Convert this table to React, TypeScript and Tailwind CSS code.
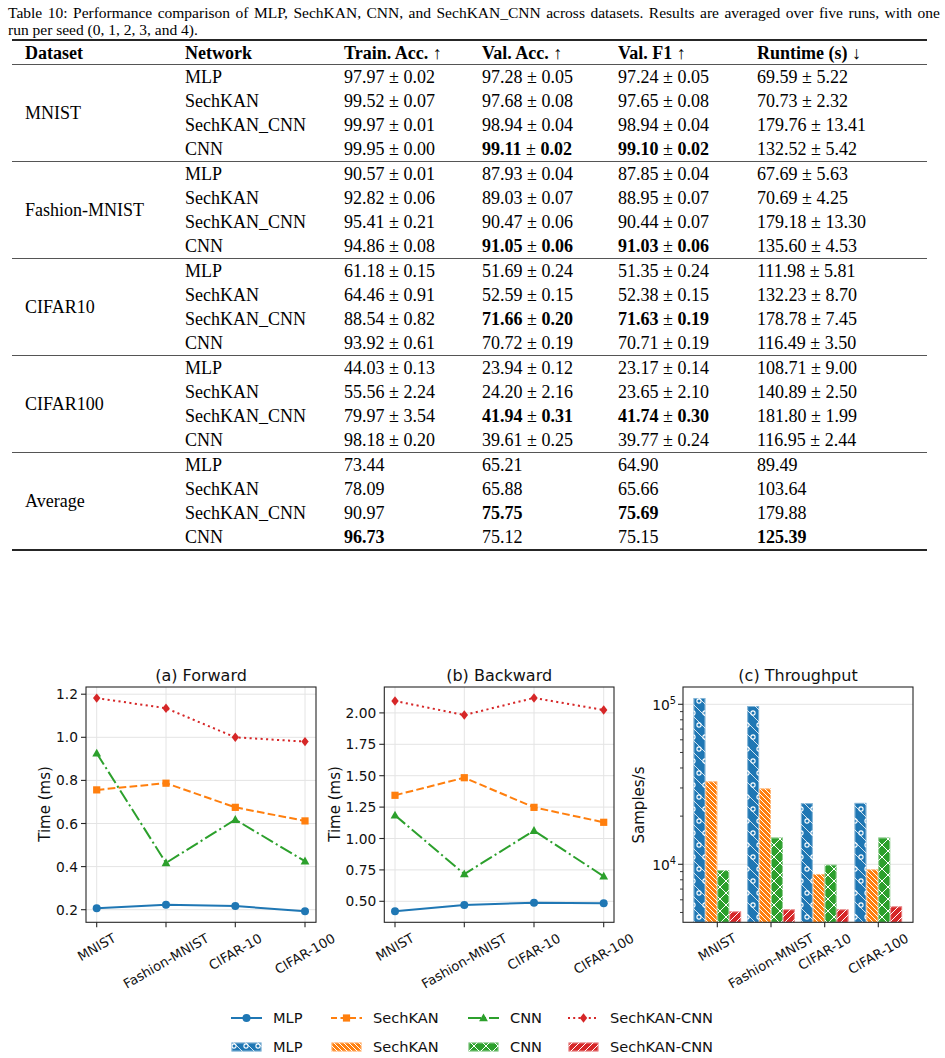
import React from "react";

const BLUE = "#1f77b4";
const ORANGE = "#ff7f0e";
const GREEN = "#2ca02c";
const RED = "#d62728";
const SANS = "'DejaVu Sans', 'Liberation Sans', sans-serif";

type Row = [string, string, string, string, string];
const groups: { name: string; rows: Row[] }[] = [
  {
    name: "MNIST",
    rows: [
      ["MLP", "97.97 ± 0.02", "97.28 ± 0.05", "97.24 ± 0.05", "69.59 ± 5.22"],
      ["SechKAN", "99.52 ± 0.07", "97.68 ± 0.08", "97.65 ± 0.08", "70.73 ± 2.32"],
      ["SechKAN_CNN", "99.97 ± 0.01", "98.94 ± 0.04", "98.94 ± 0.04", "179.76 ± 13.41"],
      ["CNN", "99.95 ± 0.00", "*99.11 ± 0.02", "*99.10 ± 0.02", "132.52 ± 5.42"],
    ],
  },
  {
    name: "Fashion-MNIST",
    rows: [
      ["MLP", "90.57 ± 0.01", "87.93 ± 0.04", "87.85 ± 0.04", "67.69 ± 5.63"],
      ["SechKAN", "92.82 ± 0.06", "89.03 ± 0.07", "88.95 ± 0.07", "70.69 ± 4.25"],
      ["SechKAN_CNN", "95.41 ± 0.21", "90.47 ± 0.06", "90.44 ± 0.07", "179.18 ± 13.30"],
      ["CNN", "94.86 ± 0.08", "*91.05 ± 0.06", "*91.03 ± 0.06", "135.60 ± 4.53"],
    ],
  },
  {
    name: "CIFAR10",
    rows: [
      ["MLP", "61.18 ± 0.15", "51.69 ± 0.24", "51.35 ± 0.24", "111.98 ± 5.81"],
      ["SechKAN", "64.46 ± 0.91", "52.59 ± 0.15", "52.38 ± 0.15", "132.23 ± 8.70"],
      ["SechKAN_CNN", "88.54 ± 0.82", "*71.66 ± 0.20", "*71.63 ± 0.19", "178.78 ± 7.45"],
      ["CNN", "93.92 ± 0.61", "70.72 ± 0.19", "70.71 ± 0.19", "116.49 ± 3.50"],
    ],
  },
  {
    name: "CIFAR100",
    rows: [
      ["MLP", "44.03 ± 0.13", "23.94 ± 0.12", "23.17 ± 0.14", "108.71 ± 9.00"],
      ["SechKAN", "55.56 ± 2.24", "24.20 ± 2.16", "23.65 ± 2.10", "140.89 ± 2.50"],
      ["SechKAN_CNN", "79.97 ± 3.54", "*41.94 ± 0.31", "*41.74 ± 0.30", "181.80 ± 1.99"],
      ["CNN", "98.18 ± 0.20", "39.61 ± 0.25", "39.77 ± 0.24", "116.95 ± 2.44"],
    ],
  },
  {
    name: "Average",
    rows: [
      ["MLP", "73.44", "65.21", "64.90", "89.49"],
      ["SechKAN", "78.09", "65.88", "65.66", "103.64"],
      ["SechKAN_CNN", "90.97", "*75.75", "*75.69", "179.88"],
      ["CNN", "*96.73", "75.12", "75.15", "*125.39"],
    ],
  },
];

function Val({ v }: { v: string }) {
  if (!v.startsWith("*")) return <>{v}</>;
  const s = v.slice(1);
  const parts = s.split(" ± ");
  if (parts.length === 1) return <b>{s}</b>;
  return (
    <>
      <b>{parts[0]}</b> ± <b>{parts[1]}</b>
    </>
  );
}

function Table() {
  return (
    <div className="font-['Liberation_Serif','Times_New_Roman',serif] text-black">
      <div className="ml-[8px] w-[932px] pt-[5px] text-[15.5px] leading-[16.5px]">
        <div className="text-justify [text-align-last:justify]">
          Table 10: Performance comparison of MLP, SechKAN, CNN, and SechKAN_CNN across datasets. Results are averaged over five runs, with one
        </div>
        <div>run per seed (0, 1, 2, 3, and 4).</div>
      </div>
      <div className="ml-[12px] mt-[1px] w-[915px] border-t-2 border-b-2 border-[#262626] text-[18px] leading-[24px]">
        <div className="grid h-[24px] grid-cols-[173px_159px_138px_136px_139px_1fr] border-b border-[#555] font-bold">
          <div className="pl-[13px]">Dataset</div>
          <div>Network</div>
          <div>
            Train. Acc. <span className="font-normal">↑</span>
          </div>
          <div>
            Val. Acc. <span className="font-normal">↑</span>
          </div>
          <div>
            Val. F1 <span className="font-normal">↑</span>
          </div>
          <div>
            Runtime (s) <span className="font-normal">↓</span>
          </div>
        </div>
        {groups.map((g, gi) => (
          <div
            key={g.name}
            className={
              gi < groups.length - 1
                ? "grid grid-cols-[173px_159px_138px_136px_139px_1fr] grid-rows-[24px_24px_24px_24px] border-b border-[#555]"
                : "grid grid-cols-[173px_159px_138px_136px_139px_1fr] grid-rows-[24px_24px_24px_24px]"
            }
          >
            <div className="row-span-4 flex items-center pl-[13px]">{g.name}</div>
            {g.rows.map((r, ri) =>
              r.map((c, ci) => (
                <div key={`${ri}-${ci}`} className="whitespace-nowrap">
                  <Val v={c} />
                </div>
              ))
            )}
          </div>
        ))}
      </div>
    </div>
  );
}

/* ---------------- charts ---------------- */

type MarkerKind = "o" | "s" | "^" | "D";

function Marker({ m, x, y, c }: { m: MarkerKind; x: number; y: number; c: string }) {
  if (m === "o") return <circle cx={x} cy={y} r={4} fill={c} />;
  if (m === "s") return <rect x={x - 3.6} y={y - 3.6} width={7.2} height={7.2} fill={c} />;
  if (m === "^")
    return <polygon points={`${x},${y - 4.6} ${x - 4.4},${y + 3.3} ${x + 4.4},${y + 3.3}`} fill={c} />;
  return <polygon points={`${x},${y - 4.7} ${x + 3.7},${y} ${x},${y + 4.7} ${x - 3.7},${y}`} fill={c} />;
}

const CW: Record<string, number> = {
  M: 0.863, N: 0.748, I: 0.295, S: 0.635, T: 0.611, F: 0.575, a: 0.613, s: 0.521, h: 0.634,
  i: 0.278, o: 0.612, n: 0.634, "-": 0.361, C: 0.698, A: 0.684, R: 0.695, "1": 0.636, "0": 0.636,
};
const tw = (s: string) => s.split("").reduce((a, ch) => a + (CW[ch] ?? 0.6), 0);

const XL = ["MNIST", "Fashion-MNIST", "CIFAR-10", "CIFAR-100"];

function XLabels({ xs, bottom }: { xs: number[]; bottom: number }) {
  const fs = 13.2;
  return (
    <>
      {XL.map((l, i) => {
        const L = tw(l) * fs;
        const h = L * 0.5 + fs * 0.95 * 0.866;
        const cy = bottom + 9 + h / 2;
        return (
          <text
            key={l}
            x={xs[i]}
            y={cy}
            fontSize={fs}
            textAnchor="middle"
            dominantBaseline="central"
            transform={`rotate(-30 ${xs[i]} ${cy})`}
            fill="#111"
          >
            {l}
          </text>
        );
      })}
    </>
  );
}

type Series = { c: string; vals: number[]; dash?: string; m: MarkerKind };

const DASH_S = "7.7 3.3";
const DASH_DD = "13.3 3.3 2.1 3.3";
const DASH_DOT = "2.1 3.4";

function LineChart(p: {
  vb: string;
  w: number;
  title: string;
  L: number;
  R: number;
  T: number;
  B: number;
  xs: number[];
  yt: { v: number; l: string }[];
  ym: (v: number) => number;
  series: Series[];
  ylx: number;
}) {
  const grid = "#e4e4e4";
  return (
    <svg width={p.w} height={330} viewBox={p.vb} fontFamily={SANS} className="overflow-visible">
      {p.xs.map((x) => (
        <line key={`gx${x}`} x1={x} x2={x} y1={p.T} y2={p.B} stroke={grid} strokeWidth={1} />
      ))}
      {p.yt.map((t) => (
        <line key={`gy${t.v}`} x1={p.L} x2={p.R} y1={p.ym(t.v)} y2={p.ym(t.v)} stroke={grid} strokeWidth={1} />
      ))}
      {p.series.map((s, si) => (
        <path
          key={`l${si}`}
          d={p.xs.map((x, i) => `${i ? "L" : "M"}${x},${p.ym(s.vals[i])}`).join(" ")}
          fill="none"
          stroke={s.c}
          strokeWidth={2}
          strokeDasharray={s.dash}
          strokeLinejoin="round"
        />
      ))}
      {p.series.map((s, si) =>
        p.xs.map((x, i) => <Marker key={`m${si}-${i}`} m={s.m} x={x} y={p.ym(s.vals[i])} c={s.c} />)
      )}
      <rect x={p.L} y={p.T} width={p.R - p.L} height={p.B - p.T} fill="none" stroke="#262626" strokeWidth={1.1} />
      {p.yt.map((t) => (
        <g key={`t${t.v}`}>
          <line x1={p.L - 5} x2={p.L} y1={p.ym(t.v)} y2={p.ym(t.v)} stroke="#262626" strokeWidth={1.1} />
          <text x={p.L - 8} y={p.ym(t.v)} fontSize={13.8} textAnchor="end" dominantBaseline="central" fill="#111">
            {t.l}
          </text>
        </g>
      ))}
      {p.xs.map((x) => (
        <line key={`tx${x}`} x1={x} x2={x} y1={p.B} y2={p.B + 5} stroke="#262626" strokeWidth={1.1} />
      ))}
      <XLabels xs={p.xs} bottom={p.B} />
      <text x={(p.L + p.R) / 2} y={682} fontSize={16} textAnchor="middle" fill="#111">
        {p.title}
      </text>
      <text
        x={p.ylx}
        y={805}
        fontSize={15}
        textAnchor="middle"
        dominantBaseline="central"
        transform={`rotate(-90 ${p.ylx} 805)`}
        fill="#111"
      >
        Time (ms)
      </text>
    </svg>
  );
}

function Hatches({ p }: { p: string }) {
  const st = { stroke: "#ffffff", strokeWidth: 1, fill: "none" } as const;
  return (
    <defs>
      <pattern id={`${p}-o`} patternUnits="userSpaceOnUse" width={12} height={24}>
        <path d="M-1,-1 L13,13 M-1,11 L13,25" {...st} strokeWidth={0.8} />
        <circle cx={3} cy={6} r={2.1} {...st} strokeWidth={1.1} />
        <circle cx={9} cy={18} r={2.1} {...st} strokeWidth={1.1} />
      </pattern>
      <pattern id={`${p}-b`} patternUnits="userSpaceOnUse" width={5} height={5}>
        <path d="M-1,-1 L6,6 M-1,4 L1,6 M4,-1 L6,1" {...st} />
      </pattern>
      <pattern id={`${p}-x`} patternUnits="userSpaceOnUse" width={12} height={12}>
        <path d="M-1,-1 L13,13 M13,-1 L-1,13" {...st} />
      </pattern>
      <pattern id={`${p}-f`} patternUnits="userSpaceOnUse" width={7} height={7}>
        <path d="M-1,8 L8,-1 M-1,1 L1,-1 M6,8 L8,6" {...st} />
      </pattern>
    </defs>
  );
}

function BarChart() {
  const L = 683;
  const R = 913;
  const T = 688;
  const B = 923.3;
  const ym = (v: number) => 865.3 - Math.log10(v / 1e4) * 160;
  const xs = [717.3, 771, 824.7, 878.3];
  const w = 11.9;
  const data = [
    { c: BLUE, h: "o", vals: [1.095e5, 9.76e4, 2.41e4, 2.42e4] },
    { c: ORANGE, h: "b", vals: [3.3e4, 2.98e4, 8.7e3, 9.3e3] },
    { c: GREEN, h: "x", vals: [9.2e3, 1.47e4, 9.94e3, 1.47e4] },
    { c: RED, h: "f", vals: [5.08e3, 5.23e3, 5.23e3, 5.46e3] },
  ];
  const minor: number[] = [];
  for (let k = 2; k <= 9; k++) {
    const y = ym(k * 1e4);
    if (y >= T) minor.push(y);
  }
  for (let k = 5; k <= 9; k++) {
    const y = ym(k * 1e3);
    if (y <= B) minor.push(y);
  }
  return (
    <svg width={325} height={330} viewBox="620 660 325 330" fontFamily={SANS} className="overflow-visible">
      <Hatches p="bc" />
      {[1e4, 1e5].map((v) => (
        <line key={`g${v}`} x1={L} x2={R} y1={ym(v)} y2={ym(v)} stroke="#e4e4e4" strokeWidth={1} />
      ))}
      {data.map((s, si) =>
        s.vals.map((v, gi) => {
          const x = xs[gi] - 2 * w + si * w;
          const y = ym(v);
          return (
            <g key={`b${si}-${gi}`}>
              <rect x={x} y={y} width={w} height={B - y} fill={s.c} />
              <rect x={x} y={y} width={w} height={B - y} fill={`url(#bc-${s.h})`} />
              <rect
                x={x + 0.5}
                y={y + 0.5}
                width={w - 1}
                height={B - y - 0.5}
                fill="none"
                stroke="rgba(255,255,255,0.45)"
                strokeWidth={1}
              />
            </g>
          );
        })
      )}
      <rect x={L} y={T} width={R - L} height={B - T} fill="none" stroke="#262626" strokeWidth={1.1} />
      {minor.map((y) => (
        <line key={`mn${y}`} x1={L - 3} x2={L} y1={y} y2={y} stroke="#262626" strokeWidth={0.9} />
      ))}
      {[
        { v: 1e5, e: "5" },
        { v: 1e4, e: "4" },
      ].map((t) => (
        <g key={t.e}>
          <line x1={L - 5} x2={L} y1={ym(t.v)} y2={ym(t.v)} stroke="#262626" strokeWidth={1.1} />
          <text x={L - 7} y={ym(t.v) + 6} fontSize={13.8} textAnchor="end" fill="#111">
            10
            <tspan dy={-6} fontSize={9.8}>
              {t.e}
            </tspan>
          </text>
        </g>
      ))}
      {xs.map((x) => (
        <line key={`tx${x}`} x1={x} x2={x} y1={B} y2={B + 5} stroke="#262626" strokeWidth={1.1} />
      ))}
      <XLabels xs={xs} bottom={B} />
      <text x={(L + R) / 2} y={682} fontSize={16} textAnchor="middle" fill="#111">
        (c) Throughput
      </text>
      <text
        x={639}
        y={806}
        fontSize={15}
        textAnchor="middle"
        dominantBaseline="central"
        transform="rotate(-90 639 806)"
        fill="#111"
      >
        Samples/s
      </text>
    </svg>
  );
}

function LegendLine({ c, dash, m }: { c: string; dash?: string; m: MarkerKind }) {
  return (
    <svg width={31} height={14} viewBox="0 0 31 14">
      <line x1={0} x2={31} y1={7} y2={7} stroke={c} strokeWidth={2} strokeDasharray={dash} />
      <Marker m={m} x={15.5} y={7} c={c} />
    </svg>
  );
}

function LegendPatch({ c, h, id }: { c: string; h: string; id: string }) {
  return (
    <svg width={31} height={14} viewBox="0 0 31 14">
      <Hatches p={id} />
      <rect x={0.5} y={2.5} width={30} height={9} fill={c} />
      <rect x={0.5} y={2.5} width={30} height={9} fill={`url(#${id}-${h})`} />
      <rect x={1} y={3} width={29} height={8} fill="none" stroke="rgba(255,255,255,0.45)" strokeWidth={1} />
    </svg>
  );
}

function Legend() {
  const items1 = [
    { c: BLUE, m: "o" as MarkerKind, dash: undefined, l: "MLP" },
    { c: ORANGE, m: "s" as MarkerKind, dash: "6 3.5", l: "SechKAN" },
    { c: GREEN, m: "^" as MarkerKind, dash: "13 3 2 3", l: "CNN" },
    { c: RED, m: "D" as MarkerKind, dash: "2 3.2", l: "SechKAN-CNN" },
  ];
  const items2 = [
    { c: BLUE, h: "o", l: "MLP" },
    { c: ORANGE, h: "b", l: "SechKAN" },
    { c: GREEN, h: "x", l: "CNN" },
    { c: RED, h: "f", l: "SechKAN-CNN" },
  ];
  return (
    <div className="ml-[231px] grid grid-cols-[100px_137px_100px_auto] pt-[14px] font-['DejaVu_Sans',sans-serif] text-[14.6px] text-[#111]">
      {items1.map((it) => (
        <div key={`a${it.l}`} className="flex h-[29px] items-center gap-[11px]">
          <LegendLine c={it.c} dash={it.dash} m={it.m} />
          <span>{it.l}</span>
        </div>
      ))}
      {items2.map((it, i) => (
        <div key={`b${it.l}`} className="flex h-[29px] items-center gap-[11px]">
          <LegendPatch c={it.c} h={it.h} id={`lg${i}`} />
          <span>{it.l}</span>
        </div>
      ))}
    </div>
  );
}

function Figure() {
  const fwd = (v: number) => 910.7 - (v - 0.2) * 215.5;
  const bwd = (v: number) => 902.3 - (v - 0.5) * 125.6;
  return (
    <div className="mt-[108px]">
      <div className="flex">
        <LineChart
          vb="0 660 320 330"
          w={320}
          title="(a) Forward"
          L={86}
          R={316}
          T={688}
          B={923.3}
          xs={[96.7, 166, 235.3, 305]}
          yt={[0.2, 0.4, 0.6, 0.8, 1.0, 1.2].map((v) => ({ v, l: v.toFixed(1) }))}
          ym={fwd}
          ylx={45}
          series={[
            { c: BLUE, m: "o", vals: [0.2065, 0.223, 0.217, 0.1926] },
            { c: ORANGE, m: "s", dash: DASH_S, vals: [0.756, 0.787, 0.675, 0.612] },
            { c: GREEN, m: "^", dash: DASH_DD, vals: [0.926, 0.417, 0.618, 0.425] },
            { c: RED, m: "D", dash: DASH_DOT, vals: [1.182, 1.135, 1.0, 0.98] },
          ]}
        />
        <LineChart
          vb="320 660 300 330"
          w={300}
          title="(b) Backward"
          L={384.3}
          R={614}
          T={688}
          B={923.3}
          xs={[395, 464.3, 534, 603.7]}
          yt={[0.5, 0.75, 1.0, 1.25, 1.5, 1.75, 2.0].map((v) => ({ v, l: v.toFixed(2) }))}
          ym={bwd}
          ylx={335}
          series={[
            { c: BLUE, m: "o", vals: [0.42, 0.47, 0.489, 0.484] },
            { c: ORANGE, m: "s", dash: DASH_S, vals: [1.344, 1.484, 1.248, 1.129] },
            { c: GREEN, m: "^", dash: DASH_DD, vals: [1.185, 0.717, 1.062, 0.699] },
            { c: RED, m: "D", dash: DASH_DOT, vals: [2.095, 1.983, 2.119, 2.023] },
          ]}
        />
        <BarChart />
      </div>
      <Legend />
    </div>
  );
}

export default function App() {
  return (
    <div className="min-h-[1058px] w-[945px] overflow-hidden bg-white">
      <Table />
      <Figure />
    </div>
  );
}
